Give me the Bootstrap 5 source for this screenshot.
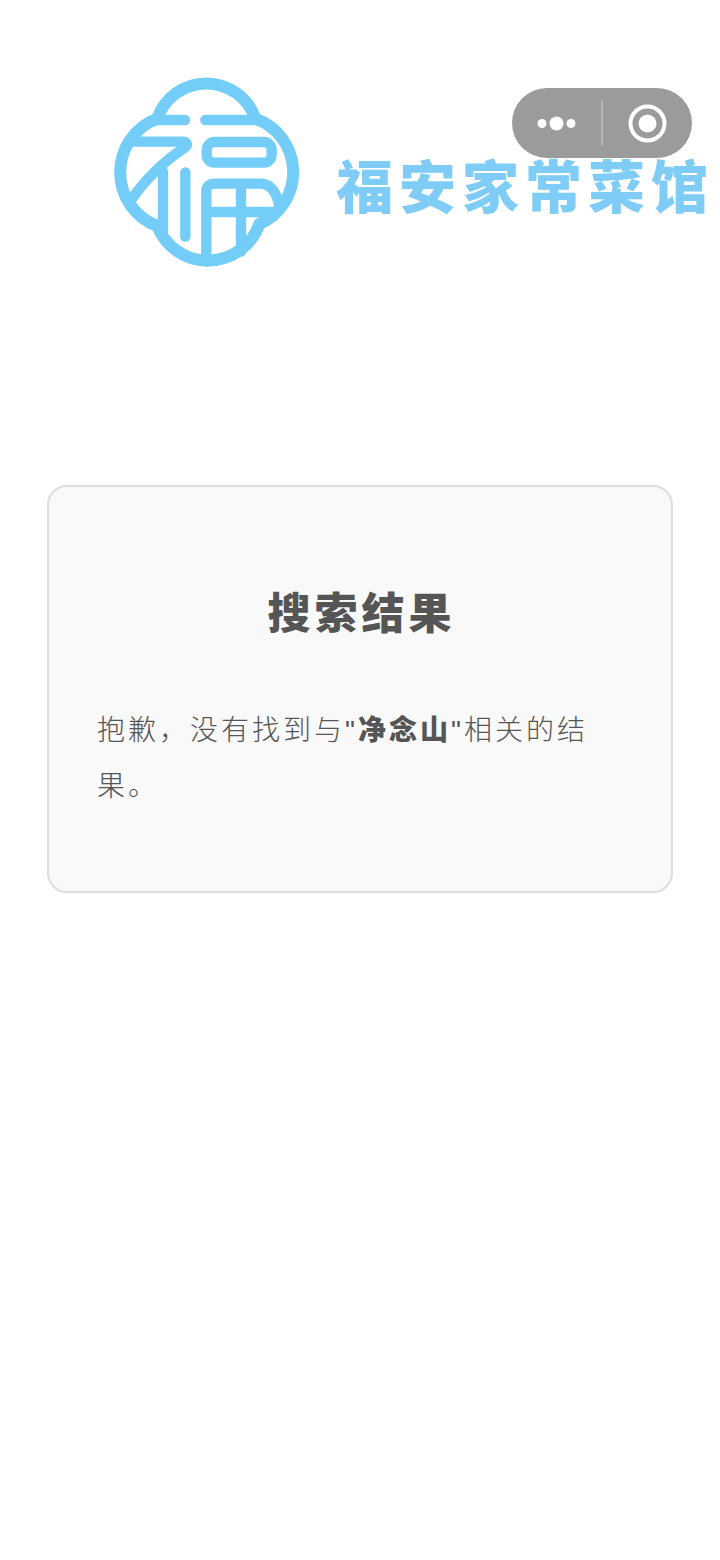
<!DOCTYPE html>
<html lang="zh-CN">
<head>
    <meta charset="UTF-8">
    <meta name="viewport" content="width=device-width, initial-scale=1.0">
    <title>搜索结果</title>
    <link href="https://cdn.jsdelivr.net/npm/bootstrap@5.3.0/dist/css/bootstrap.min.css" rel="stylesheet">
    <style>
        body { width: 720px; height: 1560px; overflow: hidden; background: #fff; font-family: "Liberation Sans", "Noto Sans CJK SC", sans-serif; color: #555; }
        .logo-bar { padding: 60px 0 0 100px; height: 280px; }
        .logo-mark { width: 220px; height: 220px; flex: none; }
        .logo-name { font-family: "Noto Sans CJK SC", sans-serif; font-weight: 900; font-size: 57px; letter-spacing: 6px; line-height: 1; color: #7fcdf6; white-space: nowrap; margin: 95px 0 0 16px; }
        .mini-capsule { position: absolute; top: 88px; left: 512px; width: 180px; height: 70px; border-radius: 35px; background: #9b9b9b; }
        .mini-capsule svg { display: block; }
        .result-box { width: 626px; height: 408px; margin: 205px 0 0 47px; padding: 91px 48px 0; background: #f9f9f9; border: 2px solid #ddd; border-radius: 20px; }
        .result-title { font-family: "Noto Sans CJK SC", sans-serif; font-weight: 900; font-size: 43px; letter-spacing: 4px; line-height: 64px; color: #555; margin: 0 0 61px; padding-left: 3px; text-align: center; }
        .result-text { font-family: "Liberation Sans", "Noto Sans CJK SC", sans-serif; font-weight: 300; font-size: 28px; letter-spacing: 3px; line-height: 56px; color: #555; margin: 0; }
        .result-text strong { font-weight: 900; }
    </style>
</head>
<body>
    <!-- 顶部 logo -->
    <div class="logo-bar d-flex align-items-start">
        <svg class="logo-mark" viewBox="0 0 660 660" fill="none" stroke="#74cdf9" stroke-width="31" stroke-linecap="round" stroke-linejoin="round">
            <!-- 外轮廓 -->
            <path stroke-width="36" d="M172 176A155 155 0 0 1 466 176A170 170 0 0 1 478 492A163 163 0 0 1 172 498A172 172 0 0 1 172 176Z"/>
            <!-- 福字左半 -->
            <path d="M160 180H255M316 180H478"/>
            <path d="M100 245H246C262 245 264 256 255 262C190 305 130 365 90 425"/>
            <path d="M189 335V515"/>
            <path d="M256 337V530"/>
            <!-- 福字右半 -->
            <rect x="320" y="246" width="195" height="62" rx="24"/>
            <path d="M319 595V395Q319 371 345 371H480Q522 371 536 430"/>
            <path d="M423 372V575"/>
            <path d="M322 456H525"/>
        </svg>
        <div class="logo-name">福安家常菜馆</div>
    </div>

    <!-- 小程序胶囊按钮 -->
    <div class="mini-capsule">
        <svg width="180" height="70" viewBox="0 0 180 70">
            <circle cx="30" cy="35.500" r="4.500" fill="#fff"/>
            <circle cx="44.500" cy="35.500" r="7" fill="#fff"/>
            <circle cx="59" cy="35.500" r="4.500" fill="#fff"/>
            <rect x="89" y="12" width="2" height="46" fill="#b4b4b4"/>
            <circle cx="135.500" cy="35.500" r="17" fill="none" stroke="#fff" stroke-width="4"/>
            <circle cx="135.500" cy="35.500" r="9" fill="#fff"/>
        </svg>
    </div>

    <!-- 搜索结果 -->
    <div class="result-box">
        <h2 class="result-title">搜索结果</h2>
        <p class="result-text">抱歉，没有找到与"<strong>净念山</strong>"相关的结<br>果。</p>
    </div>

    <script src="https://cdn.jsdelivr.net/npm/bootstrap@5.3.0/dist/js/bootstrap.bundle.min.js"></script>
</body>
</html>
